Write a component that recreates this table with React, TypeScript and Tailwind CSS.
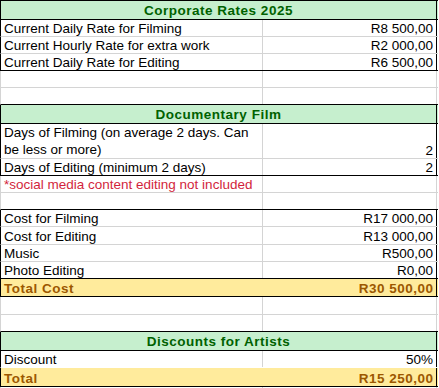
import React from "react";

type Line = "k" | "g" | "n";

const bottomCls: Record<Line, string> = {
  k: "border-b-black",
  g: "border-b-[#d4d4d4]",
  n: "border-b-transparent",
};
const leftCls: Record<Line, string> = {
  k: "border-l-black",
  g: "border-l-[#d4d4d4]",
  n: "border-l-transparent",
};
const rightCls: Record<Line, string> = {
  k: "border-r-black",
  g: "border-r-[#d4d4d4]",
  n: "border-r-transparent",
};

type RowProps = {
  h: string;
  b: Line;
  side?: Line;
  top?: boolean;
  label?: React.ReactNode;
  value?: React.ReactNode;
  tone?: "plain" | "head" | "total" | "note";
  wrap?: boolean;
};

const Row = ({ h, b, side = "g", top, label, value, tone = "plain", wrap }: RowProps) => {
  const rowBase = `flex w-[438px] border-b border-l ${h} ${bottomCls[b]} ${leftCls[side]} ${
    top ? "border-t border-t-black" : ""
  }`;

  // merged green heading across both columns
  if (tone === "head") {
    return (
      <div className={`${rowBase} bg-[#c6efce]`}>
        <div
          className={`flex w-[436px] items-center justify-center border-r font-bold tracking-[0.5px] text-[#006100] ${rightCls[side]}`}
        >
          {label}
        </div>
      </div>
    );
  }

  // filled total row, gridlines hidden under the fill
  if (tone === "total") {
    return (
      <div className={`${rowBase} bg-[#ffeb9c] font-bold tracking-[0.5px] text-[#9c5700]`}>
        <div className={`flex w-[436px] items-end justify-between border-r px-[3px] ${rightCls[side]}`}>
          <span>{label}</span>
          <span className="-mr-[0.5px]">{value}</span>
        </div>
      </div>
    );
  }

  return (
    <div className={rowBase}>
      <div
        className={`flex w-[262px] items-end border-r border-r-[#d4d4d4] px-[3px] ${
          tone === "note" ? "text-[#d21f3c]" : "text-black"
        } ${wrap ? "leading-[17px]" : ""}`}
      >
        <span className="whitespace-nowrap">{label}</span>
      </div>
      <div className={`flex w-[174px] items-end justify-end border-r px-[3px] text-black ${rightCls[side]}`}>
        {value}
      </div>
    </div>
  );
};

export default function App() {
  return (
    <div
      className="h-[388px] w-[439px] overflow-hidden bg-white text-[13.5px] leading-[15px]"
      style={{ fontFamily: '"Liberation Sans", Arial, sans-serif' }}
    >
      {/* Corporate rates */}
      <Row h="h-[20px]" b="k" side="k" top tone="head" label="Corporate Rates 2025" />
      <Row h="h-[17px]" b="g" side="k" label="Current Daily Rate for Filming" value="R8 500,00" />
      <Row h="h-[17px]" b="g" side="k" label="Current Hourly Rate for extra work" value="R2 000,00" />
      <Row h="h-[17px]" b="k" side="k" label="Current Daily Rate for Editing" value="R6 500,00" />
      <Row h="h-[17px]" b="g" />
      <Row h="h-[17px]" b="k" />

      {/* Documentary */}
      <Row h="h-[19px]" b="k" side="k" tone="head" label="Documentary Film" />
      <Row
        h="h-[35px]"
        b="g"
        side="k"
        wrap
        label={
          <>
            Days of Filming (on average 2 days. Can
            <br />
            be less or more)
          </>
        }
        value="2"
      />
      <Row h="h-[17px]" b="k" side="k" label="Days of Editing (minimum 2 days)" value="2" />
      <Row h="h-[17px]" b="g" tone="note" label="*social media content editing not included" />
      <Row h="h-[17px]" b="k" />

      {/* Costs */}
      <Row h="h-[17px]" b="g" side="k" label="Cost for Filming" value="R17 000,00" />
      <Row h="h-[18px]" b="g" side="k" label="Cost for Editing" value="R13 000,00" />
      <Row h="h-[17px]" b="g" side="k" label="Music" value="R500,00" />
      <Row h="h-[17px]" b="k" side="k" label="Photo Editing" value="R0,00" />
      <Row h="h-[18px]" b="k" side="k" tone="total" label="Total Cost" value="R30 500,00" />
      <Row h="h-[18px]" b="g" />
      <Row h="h-[17px]" b="k" />

      {/* Discounts */}
      <Row h="h-[19px]" b="k" side="k" tone="head" label="Discounts for Artists" />
      <Row h="h-[17px]" b="n" side="k" label="Discount" value="50%" />
      <Row h="h-[19px]" b="k" side="k" tone="total" label="Total" value="R15 250,00" />
      <Row h="h-[17px]" b="g" />
    </div>
  );
}
